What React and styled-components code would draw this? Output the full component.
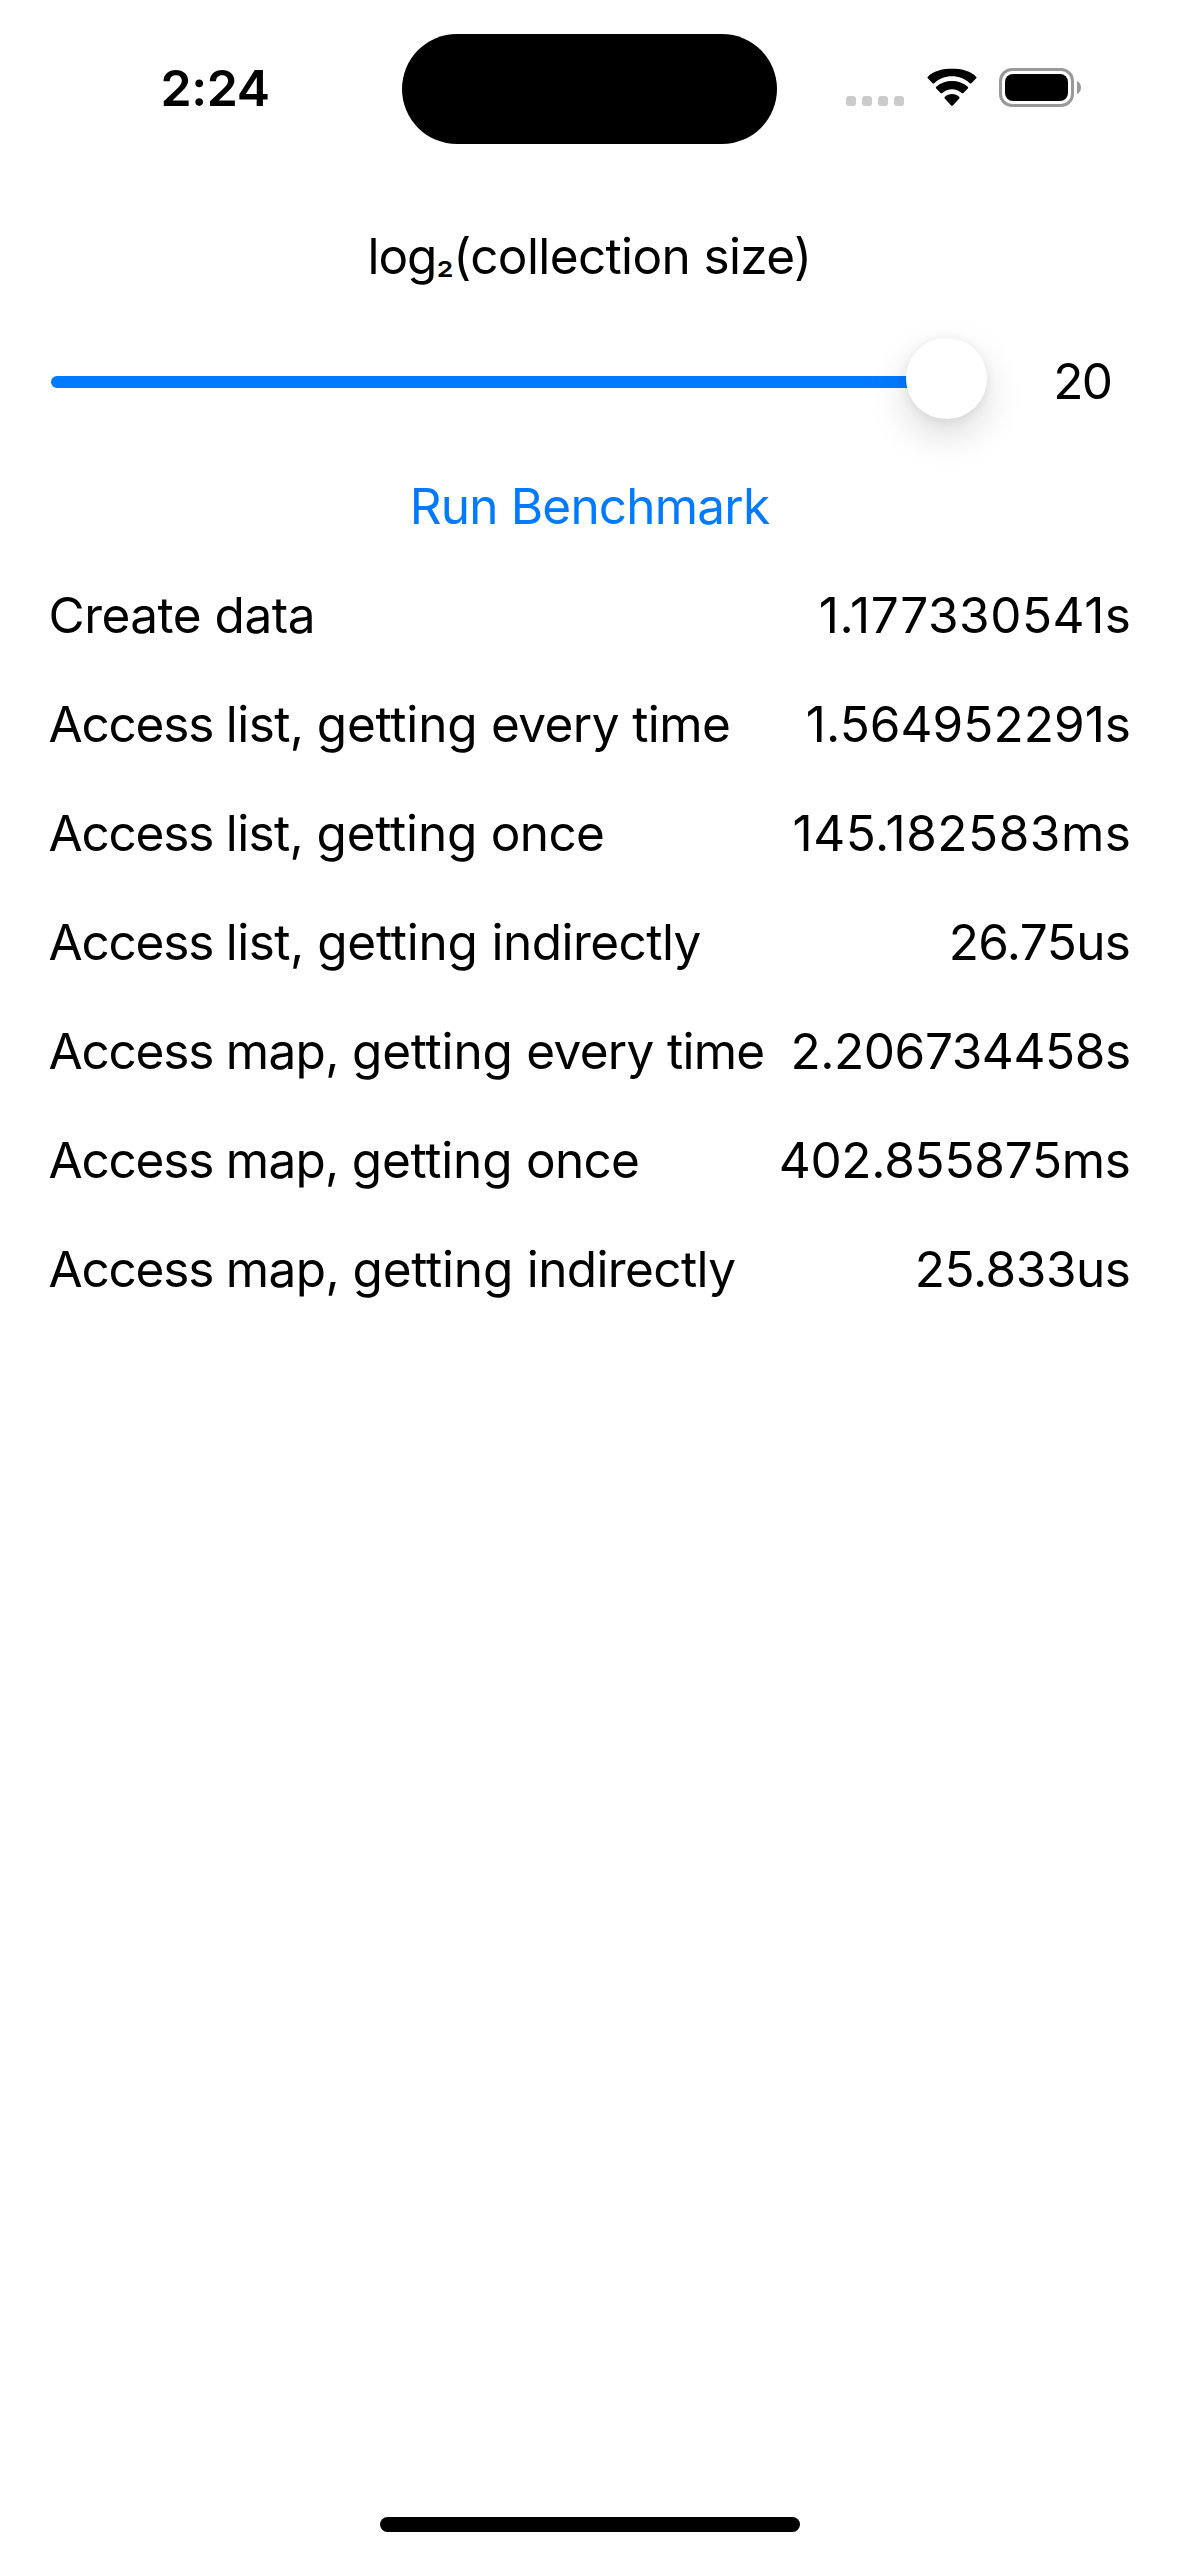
import React from "react";
import styled, { createGlobalStyle } from "styled-components";

const GlobalStyle = createGlobalStyle`
  * { box-sizing: border-box; }
  body {
    margin: 0;
    background: #fff;
    color: #000;
    font-family: Inter, "Liberation Sans", sans-serif;
  }
`;

const Screen = styled.div`
  display: flex;
  flex-direction: column;
  width: 1179px;
  height: 2556px;
  overflow: hidden;
  background: #fff;
  font-size: 49.5px;
  line-height: 60px;
  white-space: nowrap;
`;

const StatusBar = styled.header`
  display: grid;
  grid-template-columns: 402px 375px 402px;
  align-items: start;
  height: 226px;
`;

const Time = styled.div`
  padding: 58px 0 0 160.5px;
  font-size: 50px;
  font-weight: 600;
  letter-spacing: -0.4px;
`;

const Island = styled.div`
  height: 110px;
  margin-top: 34px;
  border-radius: 55px;
  background: #000;
`;

const Indicators = styled.div`
  display: flex;
  padding: 68px 0 0 69px;
`;

const Signal = styled.div`
  display: flex;
  gap: 6px;
  margin: 28px 22px 0 0;
`;

const Dot = styled.span`
  width: 10px;
  height: 10px;
  border-radius: 3px;
  background: #cbcbcb;
`;

const WifiIcon = styled.svg`
  width: 52px;
  height: 40px;
  margin-right: 21px;
`;

const BatteryBody = styled.div`
  width: 75px;
  height: 39px;
  padding: 3px;
  border: 3px solid #999;
  border-radius: 13px;
`;

const BatteryLevel = styled.div`
  height: 100%;
  border-radius: 8px;
  background: #000;
`;

const BatteryCap = styled.svg`
  width: 4px;
  height: 13px;
  margin: 13px 0 0 3px;
`;

const Main = styled.main`
  display: flex;
  flex-direction: column;
  gap: 52px;
  flex: 1;
`;

const Title = styled.div`
  text-align: center;
  letter-spacing: -0.62px;
`;

const Word = styled.span`
  letter-spacing: ${(p) => p.$track}px;
`;

const Base = styled.span`
  position: relative;
  top: -3px;
  font-size: 40px;
  line-height: 0;
`;

const SliderRow = styled.div`
  display: flex;
  height: 86px;
  padding-left: 51px;
`;

const Slider = styled.div`
  position: relative;
  width: 936px;
  padding-top: 38px;
`;

const Track = styled.div`
  height: 12px;
  width: 895px;
  border-radius: 6px;
  background: #007aff;
`;

const Thumb = styled.div`
  position: absolute;
  top: -0.5px;
  right: 0;
  width: 81px;
  height: 81px;
  border-radius: 50%;
  background: #fff;
  box-shadow: 0 16px 39px rgba(0, 0, 0, 0.15), 0 2px 12px rgba(0, 0, 0, 0.07);
`;

const SliderValue = styled.div`
  padding: 13px 0 0 66.2px;
  letter-spacing: -1.7px;
`;

const RunButton = styled.button`
  height: 60px;
  padding: 0;
  border: 0;
  background: none;
  color: #007aff;
  font: inherit;
  letter-spacing: -0.8px;
`;

const Results = styled.section`
  display: flex;
  flex-direction: column;
  gap: 49px;
  margin-top: -3px;
  padding: 0 48px 0 48.5px;
`;

const Row = styled.div`
  display: flex;
  justify-content: space-between;
  height: 60px;
`;

const Label = styled.span`
  letter-spacing: ${(p) => p.$track}px;
`;

const Value = styled.span`
  margin-right: ${(p) => -p.$track}px;
  letter-spacing: ${(p) => p.$track}px;
`;

const HomeBar = styled.div`
  width: 420px;
  height: 15px;
  margin: 0 0 24px 380px;
  border-radius: 8px;
  background: #000;
`;

const wordTracking = { Access: -1.2, getting: -0.2 };

const results = [
  ["Create data", -0.5, "1.177330541s", 0.55],
  ["Access list, getting every time", -0.6, "1.564952291s", 0.05],
  ["Access list, getting once", -0.64, "145.182583ms", 0.53],
  ["Access list, getting indirectly", -0.53, "26.75us", -0.57],
  ["Access map, getting every time", -0.7, "2.206734458s", -0.41],
  ["Access map, getting once", -0.76, "402.855875ms", -0.25],
  ["Access map, getting indirectly", -0.61, "25.833us", -0.44],
];

export default function App() {
  return (
    <Screen>
      <GlobalStyle />
      <StatusBar>
        <Time>2:24</Time>
        <Island />
        <Indicators>
          <Signal>
            <Dot />
            <Dot />
            <Dot />
            <Dot />
          </Signal>
          <WifiIcon viewBox="0 0 52 40">
            <path d="M26 8.3c6.8 0 13 2.6 17.7 6.9.5.5 1.2.5 1.7 0l4.8-4.9c.5-.5.5-1.1 0-1.6C43.7 2.5 35.2.8 26 .8S8.3 2.5 1.8 8.7c-.5.5-.5 1.1 0 1.6l4.8 4.9c.5.5 1.2.5 1.7 0C13 10.9 19.2 8.3 26 8.3z" />
            <path d="M26 21.3c3.7 0 7.1 1.4 9.7 3.7.5.5 1.2.5 1.7-.1l4.4-4.4c.5-.5.5-1.2 0-1.7-4.2-3.9-9.7-5.8-15.8-5.8s-11.6 1.9-15.8 5.8c-.5.5-.5 1.2 0 1.7l4.4 4.4c.5.6 1.2.6 1.7.1 2.6-2.3 6-3.7 9.7-3.7z" />
            <path d="M33.2 30.4c.5-.5.5-1.2-.1-1.7-1.9-1.6-4.4-2.7-7.1-2.7s-5.2 1.1-7.1 2.7c-.6.5-.6 1.2-.1 1.7l6.3 7c.5.6 1.3.6 1.8 0z" />
          </WifiIcon>
          <BatteryBody>
            <BatteryLevel />
          </BatteryBody>
          <BatteryCap viewBox="0 0 4 13">
            <path d="M0 0C2.4 1 4 3.5 4 6.5S2.4 12 0 13z" fill="#999" />
          </BatteryCap>
        </Indicators>
      </StatusBar>
      <Main>
        <Title>
          <Word $track={-1.1}>log</Word>
          <Base>₂</Base>(collection size)
        </Title>
        <SliderRow>
          <Slider>
            <Track />
            <Thumb />
          </Slider>
          <SliderValue>20</SliderValue>
        </SliderRow>
        <RunButton>Run Benchmark</RunButton>
        <Results>
          {results.map(([label, labelTrack, value, valueTrack]) => (
            <Row key={label}>
              <Label $track={labelTrack}>
                {label.split(/(?<= )/).map((word) => (
                  <Word key={word} $track={wordTracking[word.trim()] ?? labelTrack}>
                    {word}
                  </Word>
                ))}
              </Label>
              <Value $track={valueTrack}>{value}</Value>
            </Row>
          ))}
        </Results>
      </Main>
      <HomeBar />
    </Screen>
  );
}
